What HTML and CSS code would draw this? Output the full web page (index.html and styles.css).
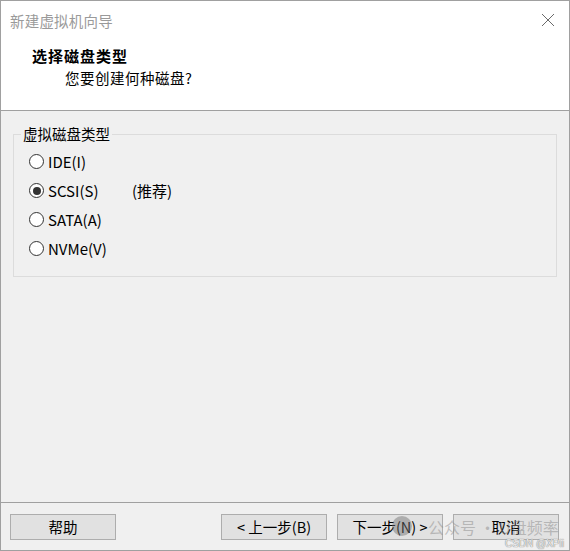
FILE: index.html
```html
<!DOCTYPE html>
<html lang="zh-CN">
<head>
<meta charset="utf-8">
<title>新建虚拟机向导</title>
<link rel="stylesheet" href="styles.css">
</head>
<body>
<div class="window">
  <div class="header">
    <div class="titlebar">
      <span class="title">新建虚拟机向导</span>
      <svg class="close" width="14" height="14" viewBox="0 0 14 14"><path d="M1 1 L13 13 M13 1 L1 13" stroke="#6a6a6a" stroke-width="1" fill="none"/></svg>
    </div>
    <div class="heading">选择磁盘类型</div>
    <div class="subheading">您要创建何种磁盘?</div>
  </div>
  <div class="content">
    <fieldset class="group">
      <legend class="legend">虚拟磁盘类型</legend>
      <div class="row"><span class="radio"></span><span class="label">IDE(I)</span></div>
      <div class="row"><span class="radio checked"></span><span class="label fixed">SCSI(S)</span><span class="label">(推荐)</span></div>
      <div class="row"><span class="radio"></span><span class="label">SATA(A)</span></div>
      <div class="row"><span class="radio"></span><span class="label">NVMe(V)</span></div>
    </fieldset>
  </div>
  <div class="footer">
    <div class="btn">帮助</div>
    <div class="right">
      <div class="btn">&lt; 上一步(B)</div>
      <div class="btn">下一步(N) &gt;</div>
      <div class="btn">取消</div>
    </div>
    <span class="wm-dot"></span>
    <span class="wm">公众号 · U盘频率</span>
    <span class="wm-csdn">CSDN @XPii</span>
  </div>
</div>
</body>
</html>
```
FILE: styles.css
```css
html, body {
  margin: 0;
  padding: 0;
  background: #f0f0f0;
}
body {
  font-family: "Noto Sans CJK SC", "Noto Sans", sans-serif;
  color: #000;
}
.window {
  width: 570px;
  height: 551px;
  box-sizing: border-box;
  border: 1px solid #a0a0a0;
  background: #f0f0f0;
  display: flex;
  flex-direction: column;
}
.header {
  height: 109px;
  background: #fff;
  border-bottom: 1px solid #a0a0a0;
  flex: none;
}
.titlebar {
  display: flex;
  align-items: center;
  justify-content: space-between;
  height: 36px;
  padding: 1px 14px 0 9px;
}
.title {
  font-size: 14.5px;
  color: #9a9a9a;
  letter-spacing: 0.2px;
}
.close {
  display: block;
}
.heading {
  margin-top: 8px;
  padding-left: 31px;
  font-size: 15px;
  font-weight: bold;
  line-height: 20px;
  letter-spacing: 1px;
}
.subheading {
  margin-top: 2px;
  padding-left: 64px;
  font-size: 14.5px;
  line-height: 20px;
  letter-spacing: 0.5px;
}
.content {
  flex: 1;
  padding: 13px 12px 0 12px;
}
.group {
  margin: 0;
  padding: 3px 0 13px 0;
  border: 1px solid #dcdcdc;
  min-width: 0;
}
.legend {
  margin-left: 7px;
  padding: 0 2px;
  font-size: 14.5px;
  line-height: 20px;
}
.row {
  display: flex;
  align-items: center;
  height: 29px;
  margin-left: 15px;
}
.radio {
  width: 15px;
  height: 15px;
  box-sizing: border-box;
  border: 1px solid #333;
  border-radius: 50%;
  background: #fff;
  display: flex;
  align-items: center;
  justify-content: center;
  flex: none;
}
.radio.checked::after {
  content: "";
  width: 8px;
  height: 8px;
  border-radius: 50%;
  background: #333;
}
.label {
  margin-left: 4px;
  font-size: 15px;
}
.label.fixed {
  width: 80px;
}
.footer {
  position: relative;
  flex: none;
  height: 47px;
  border-top: 1px solid #a0a0a0;
  display: flex;
  align-items: center;
  justify-content: space-between;
  padding: 0 10px 0 9px;
}
.right {
  display: flex;
  gap: 10px;
}
.btn {
  width: 106px;
  height: 26px;
  box-sizing: border-box;
  border: 1px solid #adadad;
  background: #e1e1e1;
  display: flex;
  align-items: center;
  justify-content: center;
  font-size: 14.5px;
}
.wm {
  position: absolute;
  left: 427px;
  top: 12px;
  font-size: 16px;
  color: rgba(140, 140, 140, 0.5);
  white-space: nowrap;
  pointer-events: none;
}
.wm-dot {
  position: absolute;
  left: 391px;
  top: 13px;
  width: 20px;
  height: 20px;
  border-radius: 50%;
  background: rgba(110, 110, 110, 0.45);
}
.wm-csdn {
  position: absolute;
  right: 5px;
  bottom: 1px;
  font-family: "Liberation Sans", sans-serif;
  font-size: 10px;
  color: rgba(240, 240, 240, 0.95);
  text-shadow: 0 0 1px #888, 0 0 1px #888;
}
```
